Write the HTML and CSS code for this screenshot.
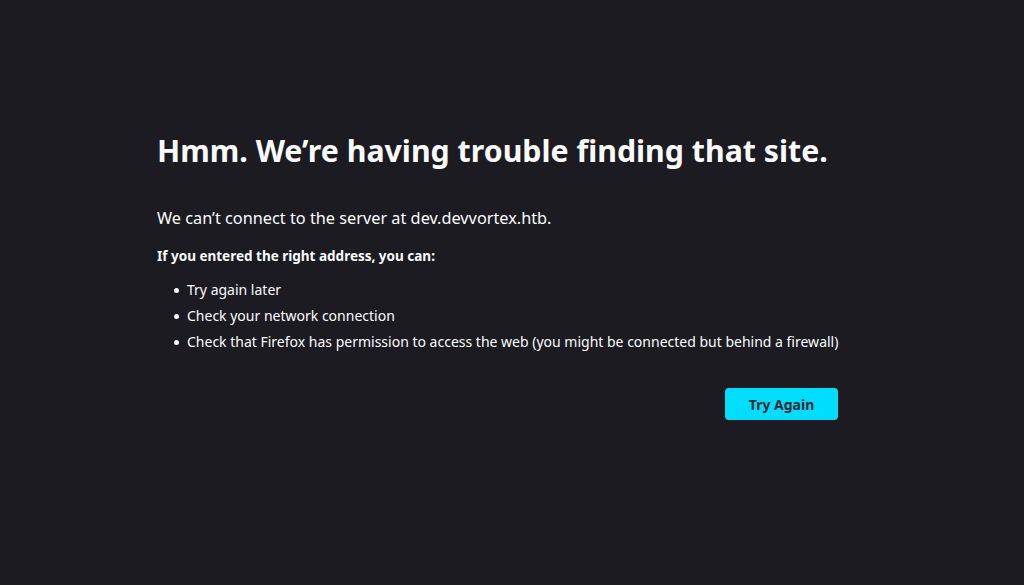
FILE: index.html
```html
<!DOCTYPE html>
<html lang="en">
<head>
<meta charset="utf-8">
<title>Server Not Found</title>
<link rel="stylesheet" href="styles.css">
</head>
<body>
<main class="container">
  <h1 class="title">Hmm. We’re having trouble finding that site.</h1>
  <p class="desc">We can’t connect to the server at dev.devvortex.htb.</p>
  <p class="strong">If you entered the right address, you can:</p>
  <ul class="tips">
    <li>Try again later</li>
    <li>Check your network connection</li>
    <li>Check that Firefox has permission to access the web (you might be connected but behind a firewall)</li>
  </ul>
  <div class="actions">
    <button class="primary">Try Again</button>
  </div>
</main>
</body>
</html>
```

FILE: styles.css
```css
html, body {
  margin: 0;
  padding: 0;
  height: 100%;
}
body {
  background: #1c1b22;
  color: #fbfbfe;
  font-family: "Noto Sans", "Open Sans", sans-serif;
}
.container {
  width: 681px;
  padding-top: 128px;
  margin-left: 157px;
  display: flex;
  flex-direction: column;
}
.title {
  margin: 0;
  font-size: 30.3px;
  font-weight: 700;
  line-height: 46px;
  white-space: nowrap;
}
.desc {
  margin: 33px 0 0;
  font-size: 16.3px;
  line-height: 22px;
}
.strong {
  margin: 16px 0 0;
  font-size: 13.5px;
  font-weight: 700;
  line-height: 22px;
}
.tips {
  margin: 13px 0 0;
  padding-left: 30px;
  font-size: 14px;
  line-height: 20px;
  list-style: none;
  white-space: nowrap;
}
.tips li {
  position: relative;
  margin-bottom: 6px;
}
.tips li::before {
  content: "";
  position: absolute;
  left: -13px;
  top: 8px;
  width: 5px;
  height: 5px;
  border-radius: 50%;
  background: #fbfbfe;
}
.actions {
  display: flex;
  justify-content: flex-end;
  margin-top: 30px;
}
.primary {
  width: 113px;
  height: 32px;
  border: none;
  border-radius: 4px;
  background: #00ddff;
  color: #2b2a33;
  font-family: inherit;
  font-size: 14px;
  font-weight: 700;
  padding: 0;
}
```
